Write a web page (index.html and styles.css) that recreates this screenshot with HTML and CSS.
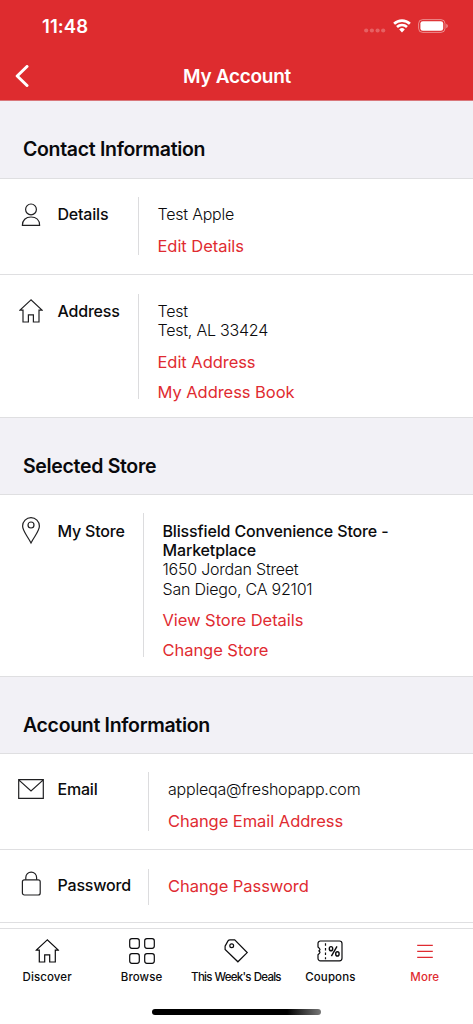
FILE: index.html
```html
<!DOCTYPE html>
<html lang="en">
<head>
<meta charset="utf-8">
<title>My Account</title>
<link rel="stylesheet" href="styles.css">
</head>
<body>
<svg class="defs" width="0" height="0">
  <symbol id="house" viewBox="0 0 24 24"><path d="M12 .9 1 11.1h3V23h5.4v-7.2h5V23H20V11.1h3z"/></symbol>
</svg>
<div class="screen">
  <header class="top">
    <div class="status">
      <span class="time">11:48</span>
      <svg class="signal" width="22" height="5" viewBox="0 0 22 5"><circle cx="2.2" cy="2.5" r="2.1"/><circle cx="7.9" cy="2.5" r="2.1"/><circle cx="13.6" cy="2.5" r="2.1"/><circle cx="19.2" cy="2.5" r="2.1"/></svg>
      <svg class="wifi" width="18" height="14" viewBox="0 0 18 14"><path d="M1.1 4.8a11.3 11.3 0 0 1 15.8 0M4 8a7.2 7.2 0 0 1 10 0"/><path class="dot" d="M6.2 10.4a4 4 0 0 1 5.6 0L9 13.4z"/></svg>
      <svg class="battery" width="30" height="14" viewBox="0 0 30 14"><rect class="case" x=".6" y=".6" width="26.4" height="12.8" rx="4"/><rect x="2.4" y="2.2" width="22.8" height="9.6" rx="2.4"/><path class="cap" d="M28.3 4.8q1.5.8 1.5 2.2t-1.5 2.2z"/></svg>
    </div>
    <div class="nav">
      <svg class="back" width="14" height="22" viewBox="0 0 14 22"><path d="M12 1.5 2.2 11 12 20.5"/></svg>
      <h1 class="title">My Account</h1>
    </div>
  </header>

  <main class="content">
    <h2 class="section first">Contact Information</h2>
    <div class="row details">
      <svg class="icon" viewBox="0 0 26 26"><circle cx="13" cy="7.4" r="5.4"/><path d="M4.4 23.3c0-5 3.3-8.3 8.6-8.3s8.6 3.3 8.6 8.3z"/></svg>
      <span class="label">Details</span>
      <div class="info"><p>Test Apple</p><a>Edit Details</a></div>
    </div>
    <div class="row address">
      <svg class="icon"><use href="#house" x="1" y="1" width="24" height="24"/></svg>
      <span class="label">Address</span>
      <div class="info"><p>Test<br>Test, AL 33424</p><a>Edit Address</a><a>My Address Book</a></div>
    </div>
    <h2 class="section">Selected Store</h2>
    <div class="row store">
      <svg class="icon" viewBox="0 0 26 26"><path d="M13 25C9.5 18 4.6 13.2 4.6 8.1a8.4 8.4 0 0 1 16.8 0c0 5.1-4.9 9.9-8.4 16.9z"/><circle cx="13" cy="7" r="3"/></svg>
      <span class="label">My Store</span>
      <div class="info"><p><strong>Blissfield Convenience Store -<br>Marketplace</strong><br>1650 Jordan Street<br>San Diego, CA 92101</p><a>View Store Details</a><a>Change Store</a></div>
    </div>
    <h2 class="section">Account Information</h2>
    <div class="row email">
      <svg class="icon" viewBox="0 0 26 26"><path d="M.7 3.6h24.6v18.8H.7zM.7 3.9 13 15 25.3 3.9"/></svg>
      <span class="label">Email</span>
      <div class="info"><p>appleqa@freshopapp.com</p><a>Change Email Address</a></div>
    </div>
    <div class="row password">
      <svg class="icon" viewBox="0 0 26 26"><rect x="4.4" y="8.8" width="17.8" height="15.2" rx="2"/><path d="M7.8 8.8V6.5a5.4 5.4 0 0 1 10.8 0v2.3"/></svg>
      <span class="label">Password</span>
      <div class="info"><a>Change Password</a></div>
    </div>
  </main>

  <nav class="tabs">
    <div class="tab"><svg class="tab-icon"><use href="#house" x="1.3" y="1" width="24" height="24"/></svg><span>Discover</span></div>
    <div class="tab"><svg class="tab-icon" viewBox="0 0 26 26"><rect x=".7" y=".7" width="9.6" height="9.6" rx="2.2"/><rect x="15.7" y=".7" width="9.6" height="9.6" rx="2.2"/><rect x=".7" y="15.7" width="9.6" height="9.6" rx="2.2"/><rect x="15.7" y="15.7" width="9.6" height="9.6" rx="2.2"/></svg><span>Browse</span></div>
    <div class="tab"><svg class="tab-icon" viewBox="0 0 26 26"><path d="M2.1 8.1 5 2.9q.7-1.1 2-1.1h4.7L24.2 14.6l-9.3 9.2L2.1 11.4z"/><circle cx="8.7" cy="7.7" r="1.9"/></svg><span class="deals">This Week's Deals</span></div>
    <div class="tab"><svg class="tab-icon" viewBox="0 0 26 26"><path d="M3.5 3h19a2.5 2.5 0 0 1 2.5 2.5v14.8a2.5 2.5 0 0 1-2.5 2.5h-19A2.4 2.4 0 0 1 1 20.3v-3.5l1.6-1.7q.8-.8 0-1.6l-.7-.6.7-.6q.8-.8 0-1.6L1 8.9V5.5A2.4 2.4 0 0 1 3.5 3z"/><path stroke-dasharray="2.5 2.2" d="M8.5 5.2v16"/><g class="percent"><ellipse cx="14" cy="10.7" rx="1.7" ry="2.1"/><ellipse cx="20.4" cy="15.9" rx="1.7" ry="2.1"/><path d="m20 8.4-5.6 9.8"/></g></svg><span>Coupons</span></div>
    <div class="tab active"><svg class="tab-icon" viewBox="0 0 26 26"><path d="M5.2 7.4h15.6M5.2 13.3h15.6M5.2 19.3h15.6"/></svg><span>More</span></div>
    <div class="home-bar"></div>
  </nav>
</div>
</body>
</html>
```
FILE: styles.css
```css
* { box-sizing: border-box; }
body { margin: 0; font-family: Inter, "Liberation Sans", sans-serif; color: #0b0b0d; background: #fff; }
h1, h2, p { margin: 0; }
svg { display: block; fill: none; stroke: currentColor; flex: none; }
.defs { display: none; }
.screen { width: 473px; height: 1024px; display: flex; flex-direction: column; overflow: hidden; }

.top { height: 101px; flex: none; background: #de2c2f; color: #fff; border-bottom: 1px solid #d9777b; }
.status { height: 51px; padding: 1px 25px 0 42px; display: flex; align-items: center; }
.time { font-size: 18.5px; font-weight: 600; letter-spacing: .1px; flex: 1; }
.signal { fill: #fff; stroke: none; opacity: .25; margin: 8px 7px 0 0; }
.wifi { stroke-width: 2.6; margin-right: 7px; }
.wifi .dot { fill: #fff; stroke: none; }
.battery { fill: #fff; stroke: none; }
.battery .case { fill: none; stroke: #fff; stroke-opacity: .45; }
.battery .cap { opacity: .5; }
.nav { height: 49px; padding-left: 15px; display: flex; align-items: center; }
.back { stroke-width: 3; stroke-linecap: round; stroke-linejoin: round; }
.title { flex: 1; padding: 1px 28px 0 0; text-align: center; font-size: 19px; font-weight: 600; letter-spacing: -.3px; }

.content { height: 827px; flex: none; overflow: hidden; }
.section { height: 76px; padding: 18px 0 0 23px; background: #f2f1f6; line-height: 60px; font-size: 19.5px; font-weight: 600; letter-spacing: -.32px; color: #09090c; }
.section.first { height: 77px; }
.row { display: flex; padding: 18px 0 0 18px; border-top: 1px solid #dfdfe1; border-bottom: 1px solid #dfdfe1; font-size: 16px; }
.row + .row { border-top: 0; padding-top: 19px; }
.icon { width: 26px; height: 26px; margin: 4px 13.5px 0 0; stroke-width: 1.2; overflow: visible; color: #202022; }
.label { line-height: 19.2px; padding-top: 8px; font-weight: 500; letter-spacing: -.2px; width: 80px; flex: none; }
.info { border-left: 1px solid #dcdcde; padding: 8px 0 0 19px; line-height: 19.2px; font-weight: 300; letter-spacing: -.22px; white-space: nowrap; }
.info p { padding-bottom: 12.4px; }
.info strong { font-weight: 500; letter-spacing: -.15px; }
.info a { display: block; margin-bottom: 10.5px; color: #df2b31; font-size: 16.5px; font-weight: 400; letter-spacing: -.05px; }
.details { height: 97px; }
.details .info { height: 58px; }
.details .icon { margin-top: 5px; }
.address { height: 143px; }
.address .info { height: 105px; }
.store { height: 183px; }
.store .info { height: 144px; padding-top: 9px; }
.store .label { width: 85px; padding-top: 9px; }
.store .icon { margin-top: 5px; }
.email { height: 97px; }
.email .info { height: 59px; }
.email .label, .password .label { width: 90.5px; }
.password { height: 73px; }
.password .info { height: 36px; }
.password .label { padding-top: 7px; }
.password .icon { margin-top: 1.5px; }

.tabs { height: 96px; border-top: 1px solid #dfdfe1; display: grid; grid-template-columns: repeat(5, 94.4px); grid-template-rows: 80px 6px; }
.tab { display: flex; flex-direction: column; align-items: center; padding-top: 9px; font-size: 11.5px; font-weight: 500; letter-spacing: .1px; white-space: nowrap; }
.tab-icon { width: 26px; height: 26px; stroke-width: 1.2; }
.tab span { line-height: 16px; margin-top: 4.6px; }
.tab .deals { letter-spacing: -.74px; word-spacing: .6px; }
.active { color: #df2b31; }
.percent { stroke-width: 1.4; }
.home-bar { grid-column: 1 / -1; width: 169px; height: 6px; margin-left: 152px; border-radius: 3px; background: linear-gradient(90deg, #000 80%, #777); }
```
